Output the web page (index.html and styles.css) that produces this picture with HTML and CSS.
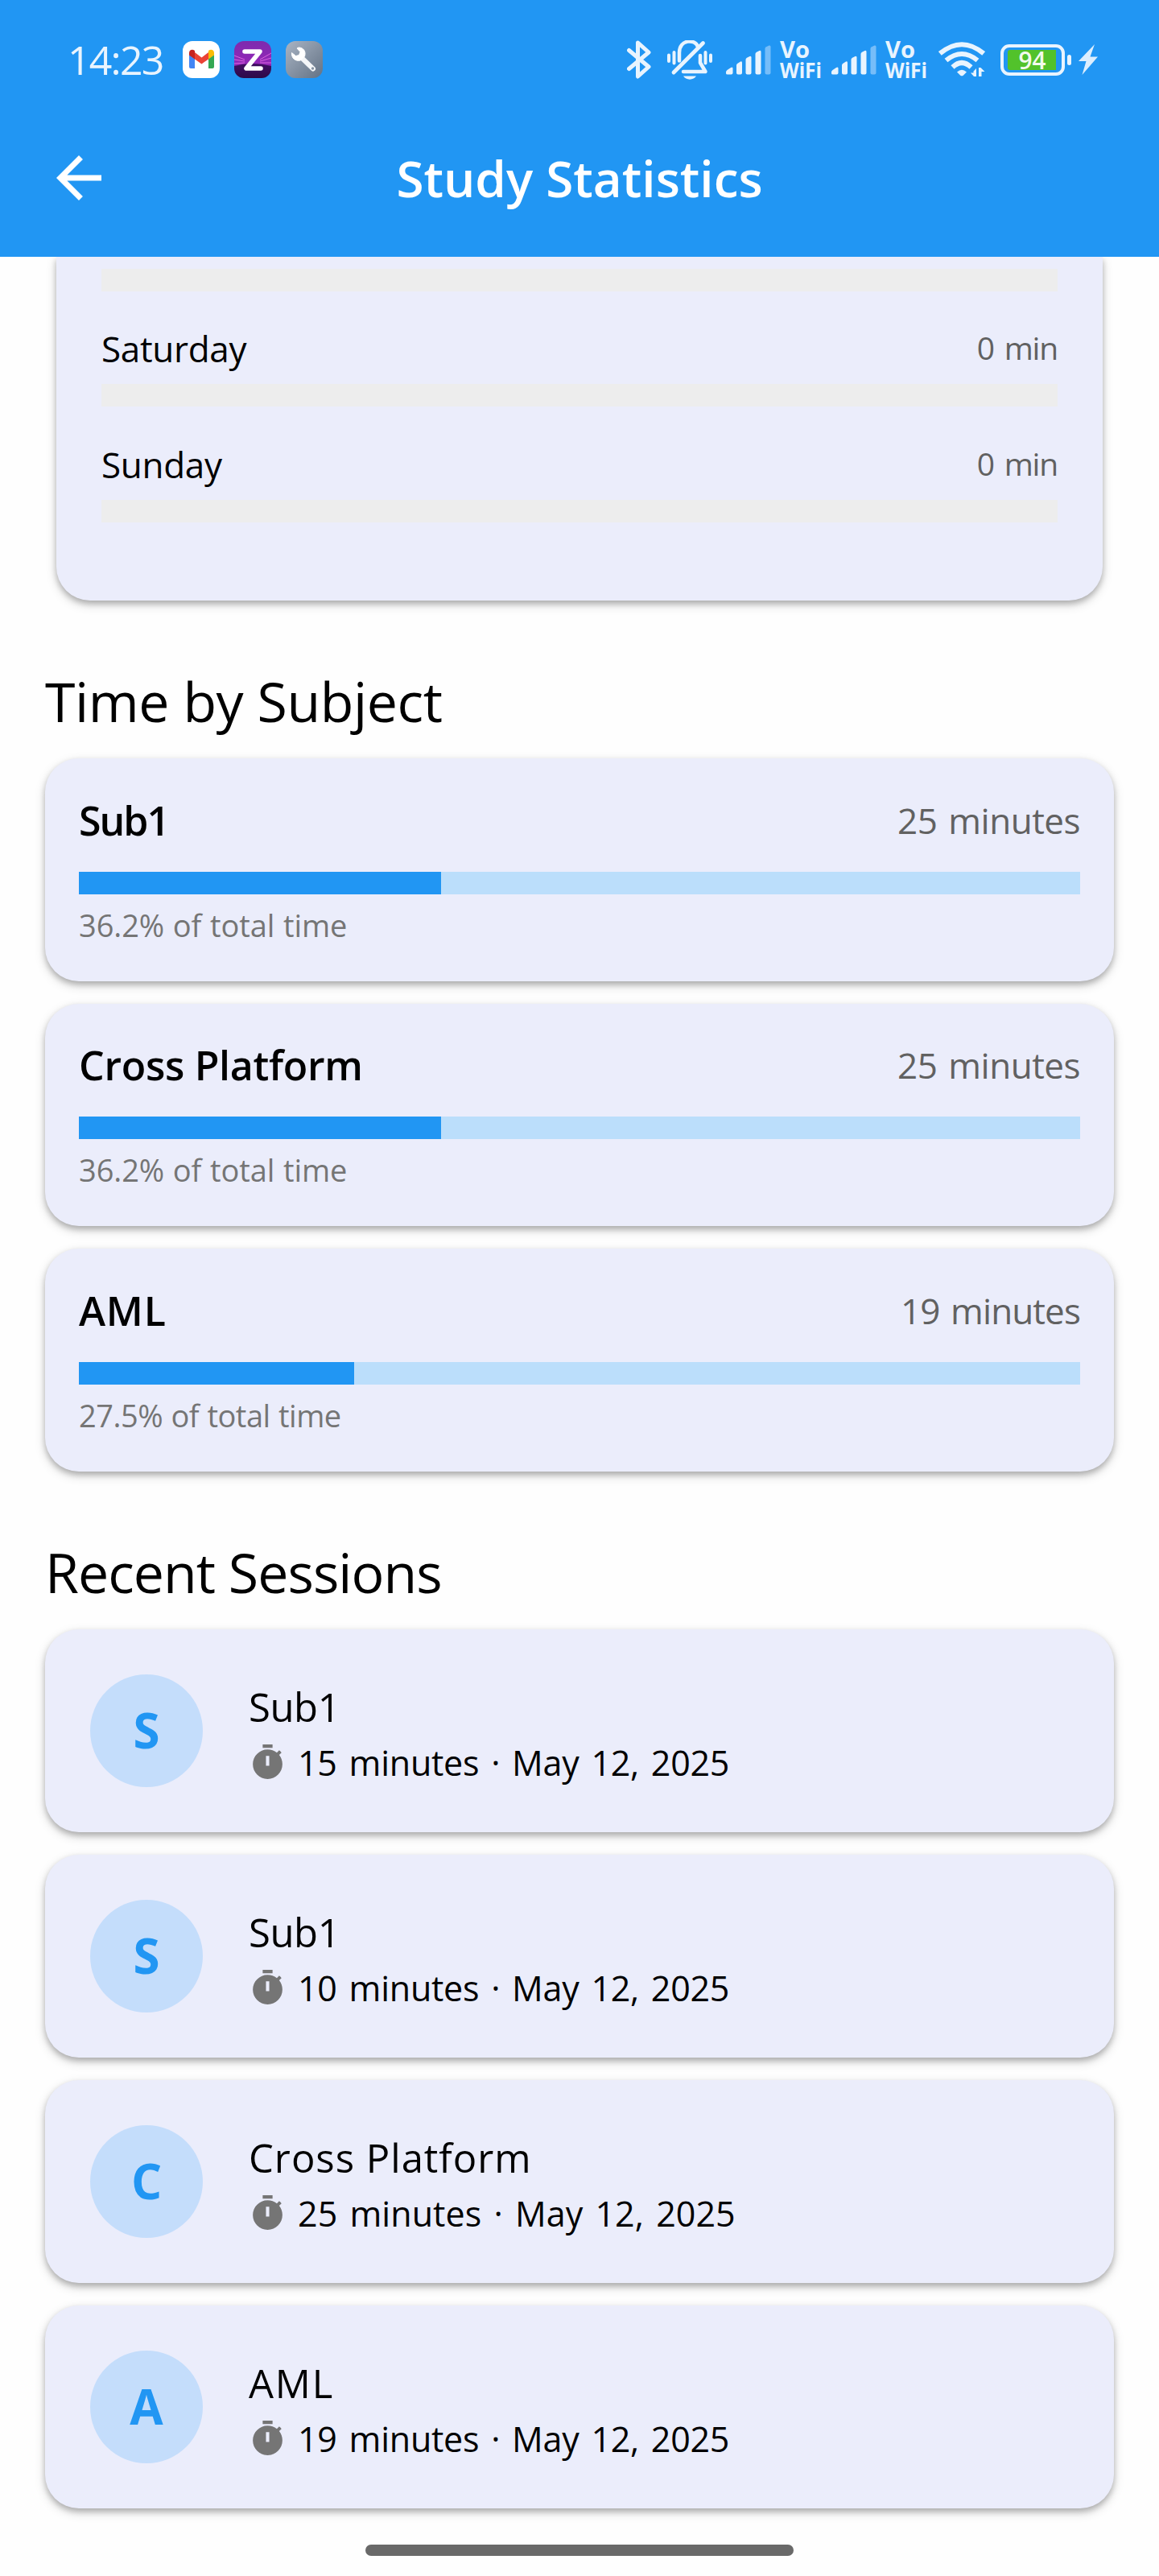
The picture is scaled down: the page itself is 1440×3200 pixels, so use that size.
FILE: index.html
```html
<!DOCTYPE html>
<html lang="en">
<head>
<meta charset="utf-8">
<title>Study Statistics</title>
<link rel="stylesheet" href="styles.css">
</head>
<body>
<svg width="0" height="0" class="defs" aria-hidden="true">
  <defs>
    <symbol id="timer" viewBox="0 0 24 24">
      <path fill="#757575" d="M9 1h6v2H9zM19.03 7.39l1.42-1.42c-.43-.51-.9-.99-1.41-1.41l-1.42 1.42C16.07 4.74 14.12 4 12 4c-4.97 0-9 4.03-9 9s4.02 9 9 9 9-4.03 9-9c0-2.12-.74-4.07-1.97-5.61zM13 14h-2V8h2v6z"/>
    </symbol>
    <symbol id="signal" viewBox="0 0 56 37">
      <g fill="#e9f4fe">
        <path d="M0 35V33.500Q0 32 1.500 31L6 28Q8.500 26.500 8.500 29V34.500Q8.500 36.500 6.500 36.500H2Q0 36.500 0 35Z"/>
        <path d="M13 25Q13 23.500 14.500 22.700L18 20.600Q20 19.500 20 22V34.500Q20 36.500 18 36.500H15Q13 36.500 13 34.500Z"/>
        <path d="M24.500 18Q24.500 16.500 26 15.700L29.500 13.900Q31.500 13 31.500 15.500V34.500Q31.500 36.500 29.500 36.500H26.500Q24.500 36.500 24.500 34.500Z"/>
        <path d="M36.500 11Q36.500 9.500 38 8.700L41.500 7.100Q43.500 6.200 43.500 8.700V34.500Q43.500 36.500 41.500 36.500H38.500Q36.500 36.500 36.500 34.500Z"/>
      </g>
      <path fill="#76bdf9" d="M48.500 4.500Q48.500 3 50 2.200L53.500.600Q55.500 0 55.500 2.300V34.500Q55.500 36.500 53.500 36.500H50.500Q48.500 36.500 48.500 34.500Z"/>
    </symbol>
    <linearGradient id="steel" x1="0" y1="0" x2="1" y2="1">
      <stop offset="0" stop-color="#a9b4c4"/><stop offset="1" stop-color="#637284"/>
    </linearGradient>
    <linearGradient id="violet" x1="0" y1="0" x2="0" y2="1">
      <stop offset="0" stop-color="#7d2bae"/><stop offset=".66" stop-color="#9527b8"/><stop offset=".7" stop-color="#3c0d5c"/><stop offset="1" stop-color="#2c0a48"/>
    </linearGradient>
  </defs>
</svg>

<header class="header">
  <div class="status">
    <span class="clock">14:23</span>
    <div class="apps">
      <svg class="app" viewBox="0 0 46 46">
        <rect width="46" height="46" rx="12" fill="#fff"/>
        <path fill="#4285f4" d="M8 15L15 20V34H10Q8 34 8 32Z"/>
        <path fill="#34a853" d="M39 15L32 20V34H37Q39 34 39 32Z"/>
        <path fill="#ea4335" d="M15 14L23.500 20.500L32 14V22.500L23.500 28.500L15 22.500Z"/>
        <path fill="#c5221f" d="M8 17.500V14.500C8 11 12 9.600 15 12V22.500Z"/>
        <path fill="#fbbc04" d="M39 17.500V14.500C39 11 35 9.600 32 12V22.500Z"/>
      </svg>
      <svg class="app" viewBox="0 0 46 46">
        <rect width="46" height="46" rx="12" fill="url(#violet)"/>
        <path d="M0 18L13 23M0 23L13 25M0 28L13 27M46 15L32 23M46 21L32 25M46 27L32 27" stroke="#d864dd" stroke-width="1"/>
        <path d="M0 31Q23 25 46 31V34H0Z" fill="#3c0d5c"/>
        <path d="M13 13H32L15 34H33" fill="none" stroke="#fff" stroke-width="5.600" stroke-linecap="round" stroke-linejoin="round"/>
      </svg>
      <svg class="app" viewBox="0 0 46 46">
        <rect width="46" height="46" rx="12" fill="url(#steel)"/>
        <path d="M19 20L34 34.500" stroke="#f4f6f8" stroke-width="6" stroke-linecap="round"/>
        <path d="M16 8C22 8 25.500 13 23.500 19L18.500 24C12 25.500 7 21.500 7.500 14.500L12.500 18.500L16.500 17.500L18 13.500L14 9Z" fill="#fff" stroke="#fff" stroke-linejoin="round"/>
        <circle cx="33.500" cy="34" r="1.700" fill="#8593a3"/>
      </svg>
    </div>
    <div class="indicators">
      <svg class="bt" width="30" height="48" viewBox="0 0 30 48"><path d="M2.500 12.500L27 33L13.500 45V3L27 15L2.500 35.500" fill="none" stroke="#e9f4fe" stroke-width="5" stroke-linecap="round" stroke-linejoin="round"/></svg>
      <svg class="bell" width="56" height="49" viewBox="0 0 56 49">
        <g fill="none" stroke="#e9f4fe" stroke-linecap="round" stroke-linejoin="round">
          <path d="M2 18.500V26M8.500 15V28.500M47.500 15V28.500M54 18.500V26" stroke-width="4"/>
          <path d="M15 25.500V15.500C15 -1.500 35 -2 38 8" stroke-width="4.500"/>
          <path d="M41 19V28L47.500 39H20" stroke-width="4.500"/>
          <path d="M8 40L44.500 3.500" stroke-width="4.800"/>
        </g>
        <path d="M20 44.500H36C33 50 23 50 20 44.500Z" fill="#e9f4fe"/>
      </svg>
      <svg class="sig" width="56" height="37"><use href="#signal"/></svg>
      <svg class="vowifi" width="52" height="50" viewBox="0 0 52 50"><text x="0" y="22.500" font-size="29" textLength="37" lengthAdjust="spacingAndGlyphs">Vo</text><text x="0" y="48" font-size="27" textLength="52" lengthAdjust="spacingAndGlyphs">WiFi</text></svg>
      <svg class="sig sig2" width="56" height="37"><use href="#signal"/></svg>
      <svg class="vowifi" width="52" height="50" viewBox="0 0 52 50"><text x="0" y="22.500" font-size="29" textLength="37" lengthAdjust="spacingAndGlyphs">Vo</text><text x="0" y="48" font-size="27" textLength="52" lengthAdjust="spacingAndGlyphs">WiFi</text></svg>
      <svg class="wifi" width="58" height="44" viewBox="0 0 58 44">
        <g fill="none" stroke="#e9f4fe" stroke-width="6">
          <path d="M1.800 14.500Q29 -8 56.200 14.500"/>
          <path d="M9.500 23Q29 7 48.500 23"/>
          <path d="M17.500 31.500Q29 20.500 40.500 31.500"/>
        </g>
        <path d="M23 37.500Q29 32 35 37.500L31 41.500Q29 43.200 27 41.500Z" fill="#e9f4fe"/>
        <path d="M47 33V43H44L40 38.500H43.500V36.500ZM50 43V32H52.500L57.500 37H53.500V43Z" fill="#e9f4fe"/>
      </svg>
      <svg class="battery" width="88" height="39" viewBox="0 0 88 39">
        <rect x="2" y="2" width="76" height="35" rx="9" fill="none" stroke="#e9f4fe" stroke-width="4"/>
        <path d="M12 7H69V32H12Q9 32 9 29V10Q9 7 12 7Z" fill="#52c22b"/>
        <rect x="83" y="13" width="5" height="13" rx="2.500" fill="#e9f4fe"/>
        <text x="22.500" y="31" font-size="31" textLength="34" lengthAdjust="spacingAndGlyphs" class="level">94</text>
      </svg>
      <svg class="bolt" width="24" height="38" viewBox="0 0 24 38"><path d="M20 0L0 21H9.500L4.500 38L24 15.500H14.500Z" fill="#dceefe"/></svg>
    </div>
  </div>
  <div class="appbar">
    <svg class="back" width="56" height="56" viewBox="4 4 16 16"><path fill="#fff" d="M20 11H7.830l5.590-5.590L12 4l-8 8 8 8 1.410-1.410L7.830 13H20z"/></svg>
    <h1>Study Statistics</h1>
  </div>
</header>

<main>
  <section class="card week">
    <div class="track"></div>
    <div class="day"><span class="name">Saturday</span><span class="mins">0 min</span></div>
    <div class="track"></div>
    <div class="day"><span class="name">Sunday</span><span class="mins">0 min</span></div>
    <div class="track"></div>
  </section>

  <h2 class="h-subject">Time by Subject</h2>
  <section class="list">
    <article class="card subject">
      <div class="row"><b class="short">Sub1</b><span>25 minutes</span></div>
      <div class="bar"><div class="fill" style="width:36.2%"></div></div>
      <p>36.2% of total time</p>
    </article>
    <article class="card subject">
      <div class="row"><b>Cross Platform</b><span>25 minutes</span></div>
      <div class="bar"><div class="fill" style="width:36.2%"></div></div>
      <p>36.2% of total time</p>
    </article>
    <article class="card subject">
      <div class="row"><b class="caps">AML</b><span>19 minutes</span></div>
      <div class="bar"><div class="fill" style="width:27.5%"></div></div>
      <p>27.5% of total time</p>
    </article>
  </section>

  <h2 class="h-recent">Recent Sessions</h2>
  <section class="list">
    <article class="card session">
      <div class="avatar">S</div>
      <div class="info"><h3 class="short">Sub1</h3><p><svg><use href="#timer"/></svg><span>15 minutes · May 12, 2025</span></p></div>
    </article>
    <article class="card session">
      <div class="avatar">S</div>
      <div class="info"><h3 class="short">Sub1</h3><p><svg><use href="#timer"/></svg><span>10 minutes · May 12, 2025</span></p></div>
    </article>
    <article class="card session">
      <div class="avatar">C</div>
      <div class="info"><h3>Cross Platform</h3><p><svg><use href="#timer"/></svg><span class="wide">25 minutes · May 12, 2025</span></p></div>
    </article>
    <article class="card session">
      <div class="avatar">A</div>
      <div class="info"><h3 class="caps">AML</h3><p><svg><use href="#timer"/></svg><span>19 minutes · May 12, 2025</span></p></div>
    </article>
  </section>
</main>
<div class="homebar"></div>
</body>
</html>
```
FILE: styles.css
```css
* { box-sizing: border-box; margin: 0; padding: 0; }
body {
  width: 1440px;
  height: 3200px;
  overflow: hidden;
  background: #fefefe;
  color: #000;
  font-family: "Open Sans", "Noto Sans", sans-serif;
}
svg { display: block; flex: none; }
.defs { position: absolute; }

/* header */
.header { position: relative; z-index: 1; height: 319px; background: #2196f3; color: #fff; }
.status {
  display: flex;
  align-items: center;
  height: 124px;
  padding: 24px 76px 0 84px;
}
.clock {
  width: 143px;
  font-size: 50px;
  line-height: 60px;
  letter-spacing: -1.8px;
  font-weight: 500;
  color: #e9f4fe;
}
.apps { display: flex; gap: 18px; }
.app { width: 46px; height: 46px; }
.indicators { display: flex; align-items: center; margin-left: auto; }
.bt { margin-right: 20px; }
.bell { margin-right: 17px; }
.sig { margin-right: 11px; }
.sig2 { margin-left: 12px; }
.wifi { margin-left: 14px; }
.battery { margin-left: 19px; }
.bolt { margin-left: 9px; }
.vowifi { overflow: visible; }
.vowifi text { fill: #e9f4fe; font-family: "Open Sans", sans-serif; font-weight: 700; }
.level { fill: #f3faee; font-family: "Open Sans", sans-serif; font-weight: 600; }

.appbar {
  display: grid;
  grid-template-columns: 56px 1fr 56px;
  align-items: center;
  height: 194px;
  padding: 0 70px;
}
h1 {
  text-align: center;
  font-size: 62px;
  font-weight: 600;
  letter-spacing: 0;
  line-height: 84px;
}

/* cards */
.card {
  background: #ebedfb;
  border-radius: 42px;
  box-shadow: 0 4px 7px rgba(0, 0, 0, .22), 0 5px 14px rgba(0, 0, 0, .16);
}
.week {
  height: 427px;
  margin: 0 70px;
  padding: 14.5px 56px 0;
  border-radius: 0 0 42px 42px;
}
.track { height: 28px; background: #ededed; }
.day {
  display: flex;
  justify-content: space-between;
  align-items: center;
  height: 115.5px;
  padding: 42px 0 14px;
}
.name { font-size: 44px; line-height: 60px; letter-spacing: -.3px; }
.mins { font-size: 39px; line-height: 56px; letter-spacing: -1.2px; word-spacing: 4px; color: #616161; padding-bottom: 2px; }

h2 {
  height: 196.25px;
  padding: 78px 56px 0;
  font-size: 68px;
  font-weight: 400;
  line-height: 93px;
}
.h-subject { letter-spacing: -.4px; }
.h-recent { letter-spacing: -.95px; }
.list { display: flex; flex-direction: column; gap: 28px; padding: 0 56px; }

/* subjects */
.subject { height: 276.5px; padding: 42px; }
.row { display: flex; justify-content: space-between; align-items: center; height: 69px; margin-bottom: -2px; }
.row b { font-size: 50px; font-weight: 650; letter-spacing: -.3px; }
.row b.short { letter-spacing: -2px; }
.row b.caps { letter-spacing: .8px; }
.row span { font-size: 44px; color: #616161; letter-spacing: -.5px; word-spacing: 3px; }
.subject:last-child .row span { letter-spacing: -.9px; }
.bar { height: 28px; margin-top: 31.5px; background: #bbdefb; }
.fill { height: 100%; background: #2196f3; }
.subject p { margin-top: 12px; font-size: 38px; line-height: 52px; letter-spacing: -.1px; word-spacing: 1px; color: #757575; }
.subject:last-child p { letter-spacing: -.5px; }

/* sessions */
.session { display: flex; align-items: center; gap: 56px; height: 252px; padding: 0 56px; }
.avatar {
  width: 140px;
  height: 140px;
  border-radius: 50%;
  background: #c4ddfb;
  color: #2196f3;
  font-size: 60px;
  font-weight: 700;
  line-height: 139px;
  text-align: center;
}
.info { padding: 8px 0 0 1px; }
.info h3 { font-size: 49px; font-weight: 400; line-height: 70px; letter-spacing: 1px; }
.info h3.short { letter-spacing: -.4px; }
.info h3.caps { letter-spacing: 1.8px; }
.info p { display: flex; align-items: center; gap: 13px; height: 68px; font-size: 43px; letter-spacing: -.25px; word-spacing: 4px; }
.info p .wide { letter-spacing: .05px; }
.info svg { width: 49px; height: 49px; margin-left: -1px; }

.homebar { width: 532px; height: 14px; margin: 45px auto 0; border-radius: 7px; background: #696969; }
```
